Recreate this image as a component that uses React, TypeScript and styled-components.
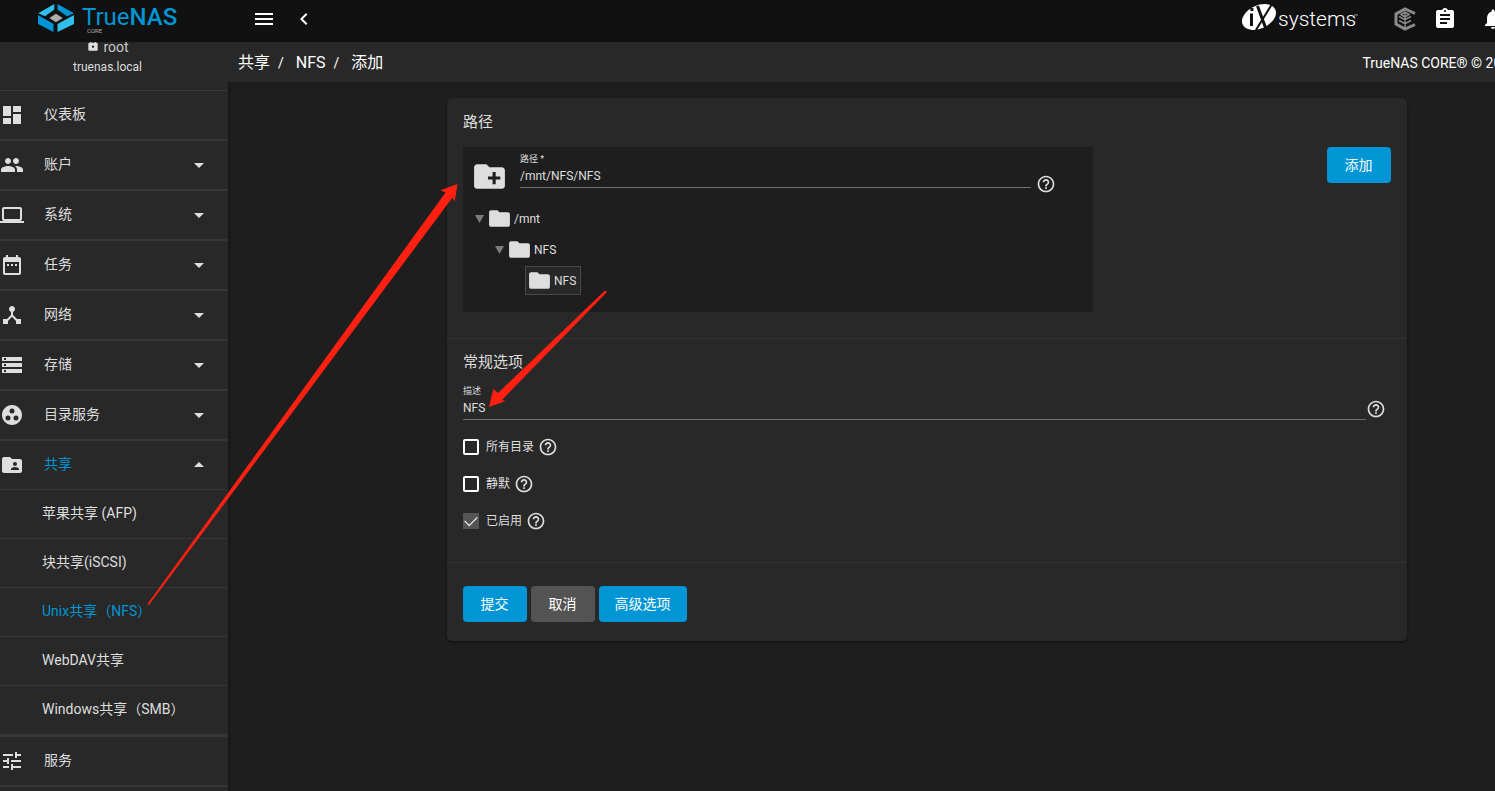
import React, { useState } from 'react';
import styled, { createGlobalStyle } from 'styled-components';
import {
  MdAssignment,
  MdChevronLeft,
  MdCreateNewFolder,
  MdDashboard,
  MdDateRange,
  MdDeviceHub,
  MdFolder,
  MdFolderShared,
  MdGroupWork,
  MdHelpOutline,
  MdLaptop,
  MdLock,
  MdMenu,
  MdNotifications,
  MdPeople,
  MdStorage,
  MdTune,
  MdArrowDropDown,
  MdArrowDropUp,
} from 'react-icons/md';

const GlobalStyle = createGlobalStyle`
  * { box-sizing: border-box; }
  body {
    margin: 0;
    background: #1e1e1e;
    color: #dedede;
    font: 14px/20px Roboto, "Noto Sans CJK SC", sans-serif;
    overflow: hidden;
  }
  button, input { font: inherit; color: inherit; }
`;

const Shell = styled.div`
  position: relative;
  display: flex;
  flex-direction: column;
  height: 100vh;
  overflow: hidden;
`;

const TopBar = styled.header`
  display: flex;
  flex: none;
  align-items: flex-start;
  height: 42px;
  background: #111111;
  color: #ffffff;
  overflow: hidden;
`;

const Brand = styled.a`
  display: flex;
  width: 228px;
  height: 42px;
  padding-left: 36px;
`;

const IconButton = styled.button`
  display: flex;
  align-items: center;
  justify-content: center;
  width: 40px;
  height: 40px;
  padding: 0;
  border: 0;
  background: none;
  font-size: 24px;
`;

const TopLeft = styled.div`
  display: flex;
  flex: 1;
  align-items: center;
  height: 38px;
  padding-left: 16px;
`;

const TopRight = styled.div`
  display: flex;
  align-items: center;
  height: 38px;
  margin-right: -18px;

  > button:last-child { margin-left: 8px; }
`;

const VendorLink = styled.a`
  display: flex;
  margin-right: 25px;
`;

const Body = styled.div`
  display: flex;
  flex: 1;
  min-height: 0;
`;

const Sidebar = styled.aside`
  flex: none;
  width: 228px;
  padding-right: 1px;
  background: #282828;
  box-shadow: 1px 0 3px rgba(0, 0, 0, 0.3);
  overflow: hidden;
`;

const UserBox = styled.div`
  display: flex;
  flex-direction: column;
  align-items: center;
  height: 49px;
  padding-right: 12px;
  border-bottom: 1px solid #383838;
`;

const UserName = styled.div`
  display: flex;
  align-items: center;
  gap: 3px;
  height: 10px;
  color: #c8c8c8;
  line-height: 10px;

  svg { margin-bottom: 4px; color: #dedede; }
`;

const HostName = styled.div`
  margin-top: 5px;
  font-size: 12px;
`;

const NavList = styled.ul`
  margin: 0;
  padding: 0;
  list-style: none;
`;

const NavLink = styled.a<{ $active?: boolean }>`
  display: flex;
  align-items: center;
  height: ${(p) => (p.$active ? 49 : 50)}px;
  border-bottom: ${(p) => (p.$active ? 1 : 2)}px solid #363636;
  color: ${(p) => (p.$active ? '#0095d5' : '#dedede')};
  text-decoration: none;

  svg { flex: none; width: 24px; height: 24px; color: #dedede; }
  svg:last-child:not(:first-child) { margin-right: 16px; }
`;

const NavLabel = styled.span`
  flex: 1;
  margin-left: 20px;
  padding-bottom: 2px;
`;

const SubLink = styled.a<{ $active?: boolean }>`
  display: flex;
  align-items: center;
  height: 49px;
  padding: 0 0 2px 42px;
  border-bottom: 1px solid #363636;
  color: ${(p) => (p.$active ? '#0095d5' : '#dedede')};
  text-decoration: none;
  white-space: nowrap;
`;

const SubList = styled(NavList)`
  border-bottom: 2px solid #363636;
`;

const Main = styled.main`
  flex: 1;
  min-width: 0;
`;

const CrumbBar = styled.div`
  display: flex;
  align-items: center;
  justify-content: space-between;
  height: 40px;
  padding: 2px 0 0 10px;
  background: #282828;
  color: #ffffff;
  overflow: hidden;
  white-space: nowrap;
`;

const Crumbs = styled.nav`
  display: flex;
  gap: 8px;
  font-size: 16px;

  a { color: inherit; text-decoration: none; }
  a + span + a { margin-left: 4px; }
`;

const Slash = styled.span`
  font-size: 14px;
`;

const Copyright = styled.span`
  flex: none;
  margin-right: -22px;
`;

const FormArea = styled.div`
  display: flex;
  justify-content: flex-end;
  padding: 16px 88px 16px 16px;
`;

const Card = styled.form`
  flex: 1;
  max-width: 960px;
  border-radius: 5px;
  background: #282828;
  box-shadow: 0 1px 3px rgba(0, 0, 0, 0.5);
`;

const Section = styled.section<{ $height: number }>`
  min-height: ${(p) => p.$height}px;
  padding: 12px 16px 0;
  border-bottom: 1px solid #333333;

  & + & { padding-top: 11px; }
`;

const SectionTitle = styled.h2`
  margin: 0;
  font-size: 15px;
  line-height: 24px;
  font-weight: 400;
`;

const PathRow = styled.div`
  display: flex;
  align-items: flex-start;
  justify-content: space-between;
  margin-top: 13px;
`;

const Explorer = styled.div`
  flex: none;
  width: 68%;
  max-width: 630px;
  height: 165px;
  padding: 0 37px 0 8px;
  background: #1e1e1e;
`;

const PathField = styled.div`
  display: flex;
  align-items: flex-start;

  > svg { flex: none; margin: 11px 12px 0 0; font-size: 37px; }
`;

const Field = styled.label`
  display: flex;
  flex: 1;
  flex-direction: column;
  font-size: 9px;
  line-height: 12px;
`;

const TextInput = styled.input`
  width: 100%;
  height: 23px;
  padding: 0 0 1px;
  border: 0;
  border-bottom: 1px solid #6d6d6d;
  outline: 0;
  background: none;
  font-size: 12px;
  line-height: 16px;
`;

const PathLabel = styled(Field)`
  padding-top: 6px;
`;

const HelpButton = styled.button`
  display: flex;
  padding: 0;
  border: 0;
  background: none;
  font-size: 20px;
`;

const PathHelp = styled(HelpButton)`
  margin: 27px 0 0 5px;
`;

const Tree = styled.ul`
  margin: 8px 0 0;
  padding: 0;
  list-style: none;
`;

const TreeNode = styled.li<{ $level: number }>`
  display: flex;
  align-items: center;
  height: 31px;
  padding-left: ${(p) => p.$level * 20 + 4}px;
  font-size: 12px;
`;

const Toggle = styled.svg`
  width: 9px;
  height: 8px;
  margin-right: 1px;
  fill: #7c7c7c;
`;

const NodeLabel = styled.span<{ $selected?: boolean }>`
  display: flex;
  align-items: center;
  gap: 2px;
  height: 29px;
  padding: 0 4px 0 1px;
  margin-left: ${(p) => (p.$selected ? 10 : 0)}px;
  border: 1px solid ${(p) => (p.$selected ? '#484848' : 'transparent')};
  background: ${(p) => (p.$selected ? '#282828' : 'none')};

  svg { font-size: 25px; }
`;

const Button = styled.button<{ $muted?: boolean; $wide?: boolean }>`
  flex: none;
  width: ${(p) => (p.$wide ? 88 : 64)}px;
  height: 36px;
  padding: 0 1px 1px 0;
  border: 0;
  border-radius: 4px;
  background: ${(p) => (p.$muted ? '#545454' : '#0095d5')};
  color: #ffffff;
`;

const DescRow = styled.div`
  display: flex;
  align-items: flex-end;
  margin: 11px 5px 0 0;

  > button { margin-bottom: 1px; }
`;

const Checks = styled.div`
  display: flex;
  flex-direction: column;
  gap: 17px;
  margin-top: 17px;
`;

const CheckRow = styled.div`
  display: flex;
  align-items: center;
  gap: 4px;
  height: 20px;
`;

const CheckLabel = styled.label`
  display: flex;
  align-items: center;
  gap: 7px;
  font-size: 12px;
`;

const CheckBox = styled.input`
  appearance: none;
  display: grid;
  place-content: center;
  width: 16px;
  height: 16px;
  margin: 0;
  border: 2px solid #ffffff;
  border-radius: 2px;

  &:checked {
    border: 0;
    border-radius: 0;
    background: #545454;
  }
  &:checked::before {
    content: '';
    width: 11px;
    height: 6px;
    margin-bottom: 4px;
    border: solid #ffffff;
    border-width: 0 0 1px 1px;
    transform: rotate(-45deg);
  }
`;

const Actions = styled.div`
  display: flex;
  gap: 4px;
  padding: 23px 16px 19px;
`;

const Annotations = styled.svg`
  position: absolute;
  top: 0;
  left: 0;
  width: 1495px;
  height: 791px;
  pointer-events: none;
`;

const Logo = () => (
  <svg width="146" height="40" viewBox="0 0 146 40" role="img" aria-label="TrueNAS CORE">
    <path fill="#31beec" d="M2.300 13.300L18.300 4v5.500L9 16.300zM38 15v9l-16.500 8v-8z" />
    <path fill="#0095d5" d="M21.500 4L38 13.300l-7 3-9.500-6.800zM2 15l15.500 9v8L2 24z" />
    <path fill="#aeadae" d="M20 13.700l6.700 4.300L20 22.300 13.300 18z" />
    <text x="46" y="25" fill="#0095d5" fontSize="24">
      True<tspan fontWeight="500">NAS</tspan>
    </text>
    <text x="51" y="33" fill="#aeadae" fontSize="6">CORE</text>
  </svg>
);

const VendorLogo = () => (
  <svg width="118" height="36" viewBox="0 0 118 36" role="img" aria-label="iXsystems">
    <ellipse cx="17" cy="16" rx="18" ry="11.500" fill="#fff" transform="rotate(-25 17 16)" />
    <path d="M9.500 12.500V25M9.900 7v3M15.500 5l8.500 23" stroke="#111" strokeWidth="3" fill="none" />
    <path d="M30 3L14 29" stroke="#111" strokeWidth="2" fill="none" />
    <text x="36" y="25" fill="#fff" fontSize="21" fontWeight="300">systems</text>
    <path d="M112 14h4" stroke="#999" />
  </svg>
);

const Ecosystem = () => (
  <svg width="22" height="24" viewBox="0 0 22 24" fill="none" stroke="#8a8a8a">
    <path strokeWidth="3" d="M21 6.500L11 2 2 7v10l9 5 10-4.500" />
    <path strokeWidth="1.500" d="M11 6v15M5 9.500l6 3.200 6-3.200M5 13.500l6 3.200 6-3.200M11 5l4 2.500-4 2.500-4-2.500z" />
  </svg>
);

const menu = [
  { label: '仪表板', Icon: MdDashboard, leaf: true },
  { label: '账户', Icon: MdPeople },
  { label: '系统', Icon: MdLaptop },
  { label: '任务', Icon: MdDateRange },
  { label: '网络', Icon: MdDeviceHub },
  { label: '存储', Icon: MdStorage },
  { label: '目录服务', Icon: MdGroupWork },
];

const shares = ['苹果共享 (AFP)', '块共享(iSCSI)', 'Unix共享（NFS）', 'WebDAV共享', 'Windows共享（SMB）'];

const Help = () => (
  <HelpButton type="button" aria-label="帮助"><MdHelpOutline /></HelpButton>
);

const Check = ({ label, initial = false }: { label: string; initial?: boolean }) => {
  const [on, setOn] = useState(initial);
  return (
    <CheckRow>
      <CheckLabel>
        <CheckBox type="checkbox" checked={on} onChange={() => setOn(!on)} />
        {label}
      </CheckLabel>
      <Help />
    </CheckRow>
  );
};

const Caret = () => (
  <Toggle viewBox="0 0 9 8"><path d="M0 0h9L4.500 8z" /></Toggle>
);

export default function App() {
  return (
    <Shell>
      <GlobalStyle />
      <TopBar>
        <Brand href="#"><Logo /></Brand>
        <TopLeft>
          <IconButton aria-label="菜单"><MdMenu /></IconButton>
          <IconButton aria-label="返回"><MdChevronLeft /></IconButton>
        </TopLeft>
        <TopRight>
          <VendorLink href="#"><VendorLogo /></VendorLink>
          <IconButton aria-label="TrueCommand"><Ecosystem /></IconButton>
          <IconButton aria-label="任务管理"><MdAssignment /></IconButton>
          <IconButton aria-label="通知"><MdNotifications /></IconButton>
        </TopRight>
      </TopBar>
      <Body>
        <Sidebar>
          <UserBox>
            <UserName><MdLock size={14} />root</UserName>
            <HostName>truenas.local</HostName>
          </UserBox>
          <NavList>
            {menu.map(({ label, Icon, leaf }) => (
              <li key={label}>
                <NavLink href="#">
                  <Icon />
                  <NavLabel>{label}</NavLabel>
                  {!leaf && <MdArrowDropDown />}
                </NavLink>
              </li>
            ))}
            <li>
              <NavLink href="#" $active>
                <MdFolderShared />
                <NavLabel>共享</NavLabel>
                <MdArrowDropUp />
              </NavLink>
              <SubList>
                {shares.map((s, i) => (
                  <li key={s}><SubLink href="#" $active={i === 2}>{s}</SubLink></li>
                ))}
              </SubList>
            </li>
            <li>
              <NavLink href="#"><MdTune /><NavLabel>服务</NavLabel></NavLink>
            </li>
          </NavList>
        </Sidebar>
        <Main>
          <CrumbBar>
            <Crumbs>
              <a href="#">共享</a><Slash>/</Slash>
              <a href="#">NFS</a><Slash>/</Slash>
              <a href="#">添加</a>
            </Crumbs>
            <Copyright>TrueNAS CORE® © 2020</Copyright>
          </CrumbBar>
          <FormArea>
            <Card onSubmit={(e) => e.preventDefault()}>
              <Section $height={241}>
                <SectionTitle>路径</SectionTitle>
                <PathRow>
                  <Explorer>
                    <PathField>
                      <MdCreateNewFolder />
                      <PathLabel>
                        路径 *
                        <TextInput defaultValue="/mnt/NFS/NFS" />
                      </PathLabel>
                      <PathHelp type="button" aria-label="帮助"><MdHelpOutline /></PathHelp>
                    </PathField>
                    <Tree>
                      <TreeNode $level={0}><Caret /><NodeLabel><MdFolder />/mnt</NodeLabel></TreeNode>
                      <TreeNode $level={1}><Caret /><NodeLabel><MdFolder />NFS</NodeLabel></TreeNode>
                      <TreeNode $level={2}><NodeLabel $selected><MdFolder />NFS</NodeLabel></TreeNode>
                    </Tree>
                  </Explorer>
                  <Button type="button">添加</Button>
                </PathRow>
              </Section>
              <Section $height={224}>
                <SectionTitle>常规选项</SectionTitle>
                <DescRow>
                  <Field>
                    描述
                    <TextInput defaultValue="NFS" />
                  </Field>
                  <Help />
                </DescRow>
                <Checks>
                  <Check label="所有目录" />
                  <Check label="静默" />
                  <Check label="已启用" initial />
                </Checks>
              </Section>
              <Actions>
                <Button type="submit">提交</Button>
                <Button type="button" $muted>取消</Button>
                <Button type="button" $wide>高级选项</Button>
              </Actions>
            </Card>
          </FormArea>
        </Main>
      </Body>
      <Annotations viewBox="0 0 1495 791" fill="#ff2012">
        <path d="M147.500 604L445.500 192.500 440.500 190.300 457.500 184 454.700 201.700 452.500 197.500 149 605z" />
        <path d="M605 290.500L498 393 493.300 389 489 407 505.700 401 502 400 607 292z" />
      </Annotations>
    </Shell>
  );
}
